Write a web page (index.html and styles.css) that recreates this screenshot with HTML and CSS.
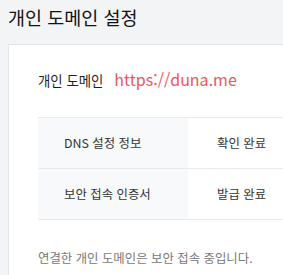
FILE: index.html
```html
<!DOCTYPE html>
<html lang="ko">
<head>
  <meta charset="UTF-8" />
  <meta name="viewport" content="width=device-width, initial-scale=1.0"/>
  <title>개인 도메인 설정</title>
  <link rel="stylesheet" href="styles.css">
</head>
<body>
  <h1 class="page-title">개인 도메인 설정</h1>

  <div class="card">
    <div class="domain-row">
      <span class="domain-label">개인 도메인</span>
      <a class="domain-url" href="#">https://duna.me</a>
    </div>

    <table class="status-table">
      <tr>
        <th>DNS 설정 정보</th>
        <td>확인 완료</td>
      </tr>
      <tr>
        <th>보안 접속 인증서</th>
        <td>발급 완료</td>
      </tr>
    </table>

    <p class="note">연결한 개인 도메인은 보안 접속 중입니다.</p>
  </div>
</body>
</html>
```

FILE: styles.css
```css
html, body { overflow: hidden; }
body {
  margin: 0; padding: 4px 0 0 8px;
  background: #f3f4f6;
  font-family: "Noto Sans CJK KR", sans-serif;
  color: #222;
}
.page-title {
  margin: 0; font-size: 18.5px; font-weight: 400;
  line-height: 27px; color: #111;
}
.card {
  width: 600px; margin-top: 13px;
  padding: 22px 29px 20px;
  background: #fff;
  border: 1px solid #e1e4ea;
}
.domain-row {
  display: flex; align-items: baseline;
  line-height: 24px;
}
.domain-label { font-size: 13.4px; color: #1e1e1e; }
.domain-url {
  margin-left: 11px; font-size: 16px;
  color: #f0555a; text-decoration: none;
}
.status-table {
  width: 100%; margin-top: 25px;
  border-collapse: collapse;
  font-size: 12.4px; color: #333;
}
.status-table th, .status-table td {
  height: 50px; padding: 0;
  border-top: 1px solid #e8eaee;
  border-bottom: 1px solid #e8eaee;
  text-align: left; font-weight: 400;
}
.status-table th {
  width: 124px; padding: 0 0 0 26px;
  background: #f8f9fb;
}
.status-table td { padding-left: 29px; }
.note {
  margin: 29px 0 0; font-size: 12.4px;
  line-height: 18px; color: #777;
}
```
